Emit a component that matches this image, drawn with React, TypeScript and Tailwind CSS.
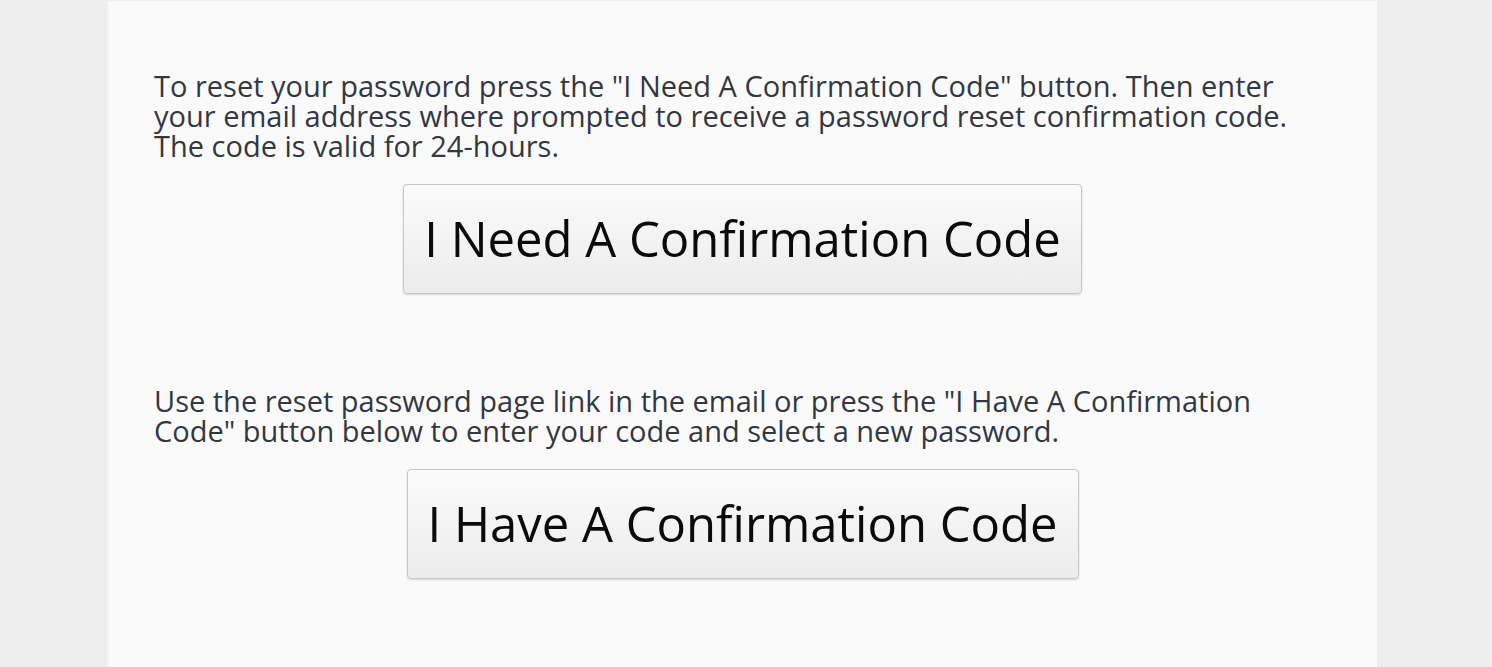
export default function App() {
  return (
    <div className="flex h-[667px] w-full bg-[#eeeeee] pl-[108px] font-['Open_Sans',sans-serif]">
      <div className="mt-[1px] flex w-[1269px] flex-col bg-[#fafafa] pt-[70px] text-[#33373f]">
        <p className="ml-[46px] w-[1150px] text-[29px] leading-[30px]">
          To reset your password press the "I Need A Confirmation Code" button. Then enter your email address where
          prompted to receive a password reset confirmation code. The code is valid for 24-hours.
        </p>
        <div className="mt-[23px] flex justify-center">
          <button className="h-[110px] rounded-[4px] border border-[#c6c6c6] bg-gradient-to-b from-[#fbfbfb] to-[#ececec] px-[20px] text-[49px] text-[#0a0a0a] shadow-[0_1px_2px_rgba(0,0,0,0.15)]">
            I Need A Confirmation Code
          </button>
        </div>
        <p className="ml-[46px] mt-[92px] w-[1150px] text-[29px] leading-[30px]">
          Use the reset password page link in the email or press the "I Have A Confirmation Code" button below to enter
          your code and select a new password.
        </p>
        <div className="mt-[23px] flex justify-center">
          <button className="h-[110px] rounded-[4px] border border-[#c6c6c6] bg-gradient-to-b from-[#fbfbfb] to-[#ececec] px-[20px] text-[49px] text-[#0a0a0a] shadow-[0_1px_2px_rgba(0,0,0,0.15)]">
            I Have A Confirmation Code
          </button>
        </div>
      </div>
    </div>
  );
}
